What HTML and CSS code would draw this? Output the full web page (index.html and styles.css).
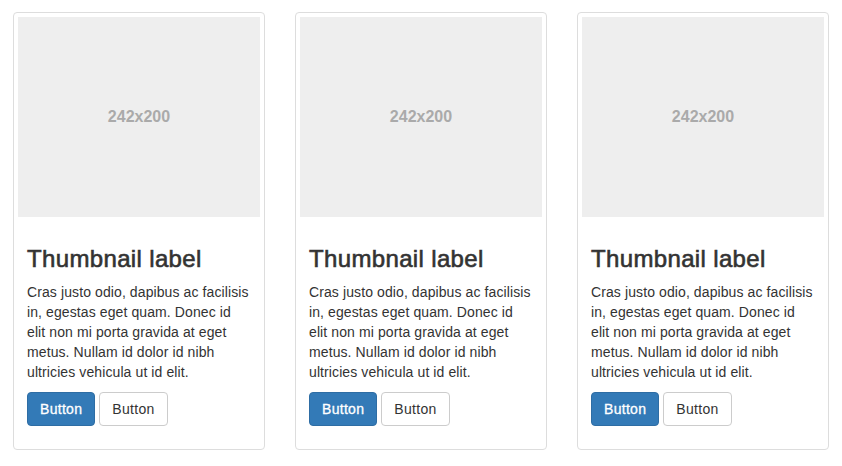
FILE: index.html
```html
<!DOCTYPE html>
<html>
<head>
<meta charset="utf-8">
<link rel="stylesheet" href="styles.css">
</head>
<body>
<div class="row">
  <div class="thumbnail">
    <div class="holder"><span>242x200</span></div>
    <div class="caption">
      <h3>Thumbnail label</h3>
      <p>Cras justo odio, dapibus ac facilisis<br>in, egestas eget quam. Donec id<br>elit non mi porta gravida at eget<br>metus. Nullam id dolor id nibh<br>ultricies vehicula ut id elit.</p>
      <p class="actions"><a class="btn btn-primary">Button</a> <a class="btn btn-default">Button</a></p>
    </div>
  </div>
  <div class="thumbnail">
    <div class="holder"><span>242x200</span></div>
    <div class="caption">
      <h3>Thumbnail label</h3>
      <p>Cras justo odio, dapibus ac facilisis<br>in, egestas eget quam. Donec id<br>elit non mi porta gravida at eget<br>metus. Nullam id dolor id nibh<br>ultricies vehicula ut id elit.</p>
      <p class="actions"><a class="btn btn-primary">Button</a> <a class="btn btn-default">Button</a></p>
    </div>
  </div>
  <div class="thumbnail">
    <div class="holder"><span>242x200</span></div>
    <div class="caption">
      <h3>Thumbnail label</h3>
      <p>Cras justo odio, dapibus ac facilisis<br>in, egestas eget quam. Donec id<br>elit non mi porta gravida at eget<br>metus. Nullam id dolor id nibh<br>ultricies vehicula ut id elit.</p>
      <p class="actions"><a class="btn btn-primary">Button</a> <a class="btn btn-default">Button</a></p>
    </div>
  </div>
</div>
</body>
</html>
```
FILE: styles.css
```css
* { box-sizing: border-box; }
html, body { margin: 0; background: #fff; }
body {
  font-family: "Liberation Sans", Arial, sans-serif;
  font-size: 14px;
  line-height: 1.42857143;
  color: #333;
}
.row {
  display: flex;
  align-items: flex-start;
  gap: 30px;
  padding: 12px 13px;
}
.thumbnail {
  flex: 0 0 252px;
  width: 252px;
  padding: 4px;
  border: 1px solid #ddd;
  border-radius: 4px;
  background: #fff;
}
.holder {
  width: 242px;
  height: 200px;
  background: #eee;
  display: flex;
  align-items: center;
  justify-content: center;
}
.holder span {
  color: #aaa;
  font-weight: bold;
  font-size: 16px;
  line-height: 1;
  margin-top: -1px;
}
.caption {
  padding: 9px;
}
.caption h3 {
  margin: 20px 0 10px;
  font-size: 24px;
  font-weight: 500;
  line-height: 1.1;
  color: #333;
  letter-spacing: 0.35px;
  -webkit-text-stroke: 0.6px #333;
}
.caption p {
  margin: 0 0 10px;
  letter-spacing: 0.1px;
  white-space: nowrap;
}
.btn {
  display: inline-block;
  padding: 6px 12px;
  font-size: 14px;
  line-height: 1.42857143;
  letter-spacing: 0.3px;
  border: 1px solid transparent;
  border-radius: 4px;
  text-align: center;
  vertical-align: middle;
  cursor: pointer;
}
.btn-primary {
  color: #fff;
  background: #337ab7;
  border-color: #2e6da4;
  -webkit-text-stroke: 0.3px #fff;
}
.btn-default {
  color: #333;
  background: #fff;
  border-color: #ccc;
}
```
